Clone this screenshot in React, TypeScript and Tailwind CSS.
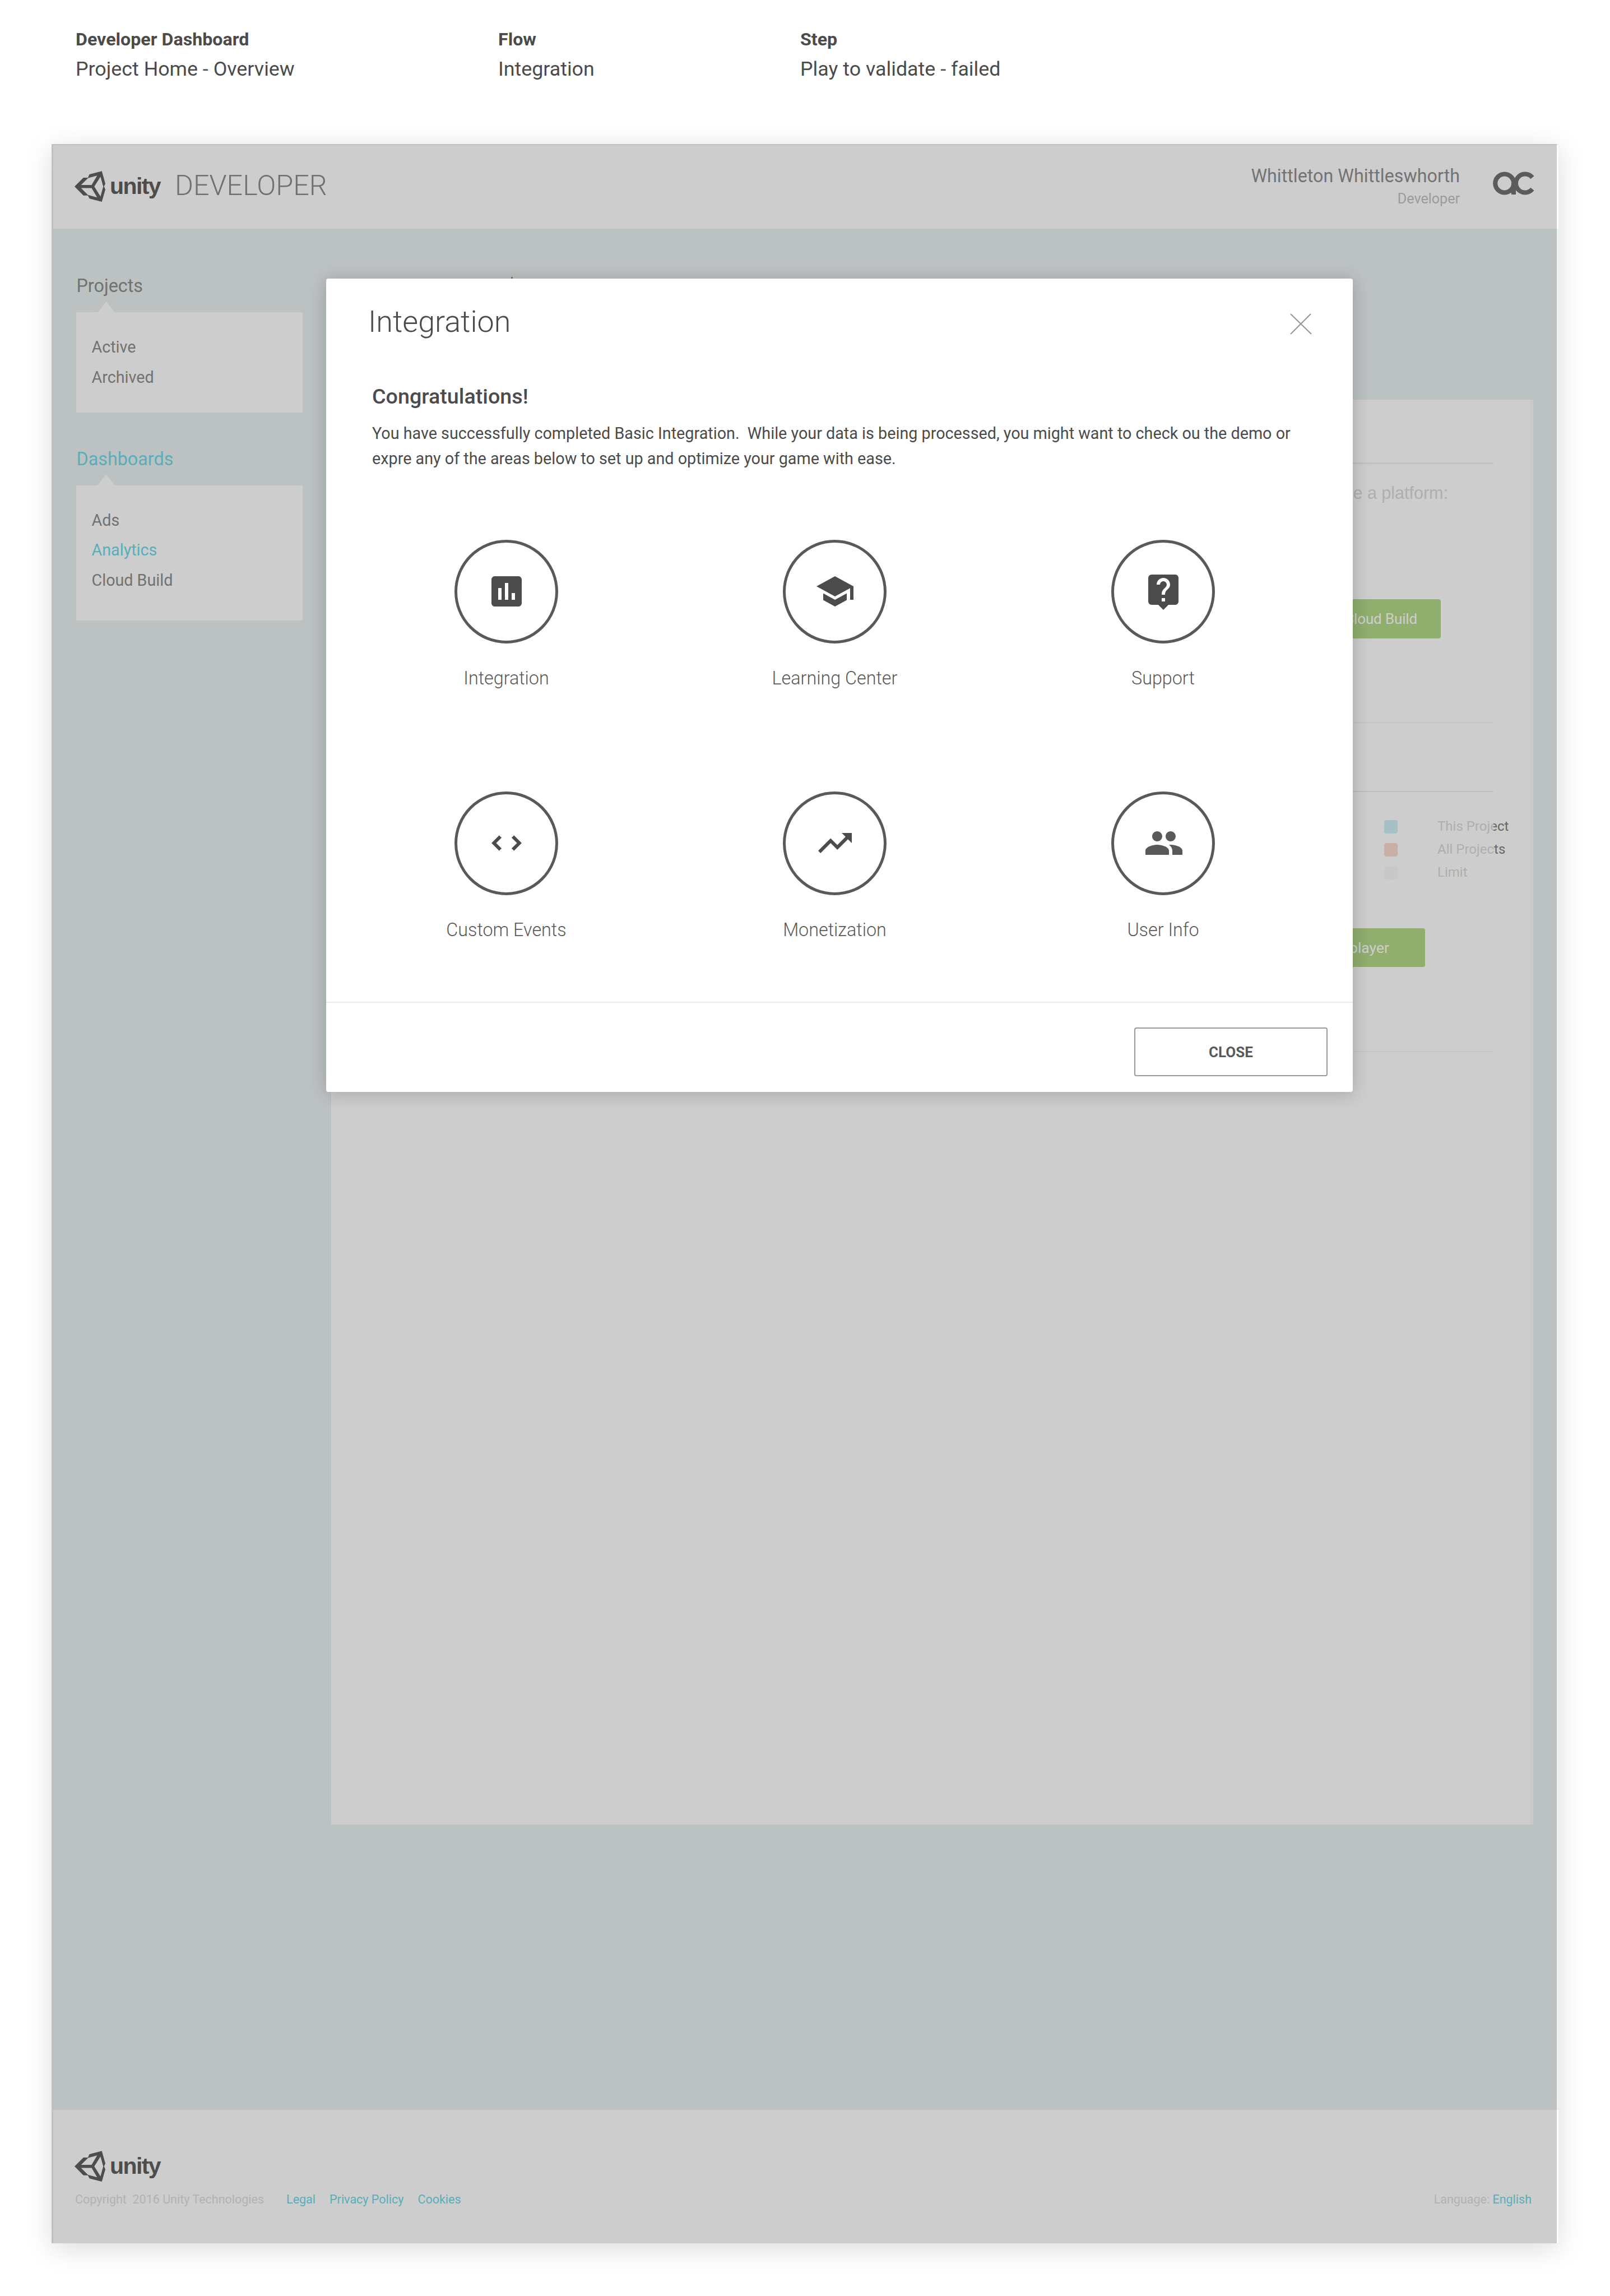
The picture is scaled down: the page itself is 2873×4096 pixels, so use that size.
import type { ReactNode } from "react";
import { MdAssessment, MdLiveHelp, MdPeople, MdSchool, MdTrendingUp } from "react-icons/md";

function UnityLogo() {
  return (
    <div className="flex h-[55px] items-start text-[#606060]">
      <svg className="h-[55px] w-[55px]" viewBox="24 28 184 184" fill="currentColor" fillRule="evenodd">
        <path d="M24 121 77 68H104L113 48 187 29 208 104 200 121 208 138 187 212 113 193 104 174H77ZM63 112H126L159 56 104 71 98 77ZM63 130 98 165 104 171 159 186 126 130ZM142 121 179 180 192 133 196 121 192 109 179 62Z" />
      </svg>
      <span className="ml-[8px] mt-[3px] w-[91px] font-['Liberation_Sans',Arial,sans-serif] text-[41px] font-bold leading-[48px] tracking-[-1.6px]">
        unity
      </span>
    </div>
  );
}

function AcLogo() {
  return (
    <svg className="h-[42px] w-[74px]" viewBox="0 0 82 46" fill="none" stroke="#727272" strokeWidth="9">
      <circle cx="23" cy="23" r="18.3" />
      <path d="M41 22V45.2" />
      <path d="M78 11.6A18.3 18.3 0 1 0 78 34.4" />
    </svg>
  );
}

function NavGroup({
  title,
  items,
  active,
  activeItem,
  boxClass,
}: {
  title: string;
  items: string[];
  active?: boolean;
  activeItem?: string;
  boxClass: string;
}) {
  return (
    <section>
      <h2 className={`pl-[0.5px] text-[32.3px] leading-[48px] ${active ? "text-[#70d9e8]" : "text-[#8e8e8e]"}`}>
        {title}
      </h2>
      <div className={`relative mt-[23px] bg-white pl-[27.5px] pt-[36px] ${boxClass}`}>
        <svg className="absolute -top-[19.5px] left-[38px] h-[20px] w-[31px]" viewBox="0 0 31 20" fill="#fff">
          <path d="M0 20 15.5 0 31 20Z" />
        </svg>
        {items.map((item) => (
          <div
            key={item}
            className={`text-[28.7px] leading-[53.9px] ${item === activeItem ? "text-[#70d9e8]" : "text-[#8e8e8e]"}`}
          >
            {item}
          </div>
        ))}
      </div>
    </section>
  );
}

function CodeIcon() {
  return (
    <svg viewBox="0 0 24 24" fill="currentColor" className="size-[72px]">
      <path d="M3 12 7.6 7.4 9 8.8 5.8 12 9 15.2 7.6 16.6ZM21 12 16.4 7.4 15 8.8 18.2 12 15 15.2 16.4 16.6Z" />
    </svg>
  );
}

const tiles: { label: string; icon: ReactNode }[] = [
  { label: "Integration", icon: <MdAssessment className="size-[72px]" /> },
  { label: "Learning Center", icon: <MdSchool className="size-[72px]" /> },
  { label: "Support", icon: <MdLiveHelp className="size-[72px]" /> },
  { label: "Custom Events", icon: <CodeIcon /> },
  { label: "Monetization", icon: <MdTrendingUp className="size-[72px]" /> },
  { label: "User Info", icon: <MdPeople className="size-[72px] translate-x-px text-[#595959]" /> },
];

const legend = [
  { label: "This Project", swatch: "bg-[#5cd0e4]" },
  { label: "All Projects", swatch: "bg-[#f58758]" },
  { label: "Limit", swatch: "bg-[#e9e9e9]" },
];

function Meta({ label, value, className }: { label: string; value: string; className: string }) {
  return (
    <div className={className}>
      <div className="text-[32.2px] font-bold leading-[54px]">{label}</div>
      <div className="text-[35.8px] leading-[52px]">{value}</div>
    </div>
  );
}

function Modal() {
  return (
    <div className="absolute left-[490px] top-[240px] flex h-[1451px] w-[1832px] flex-col rounded-[4px] bg-white text-[#4b4b4b] shadow-[0_3px_32px_rgba(0,0,0,0.2)]">
      <div className="flex items-start justify-between pl-[75px] pr-[73px] pt-[47px]">
        <h1 className="text-[53.9px] font-light leading-[60px]">Integration</h1>
        <svg className="mt-[15px] h-[38px] w-[39px]" viewBox="0 0 39 38" stroke="#959595" strokeWidth="2">
          <path d="M1 1 38 37M37 1 1 37" />
        </svg>
      </div>
      <div className="mt-[79px] pl-[82px]">
        <h2 className="text-[37.7px] font-medium leading-[48px]">Congratulations!</h2>
        <p className="mt-[20px] whitespace-pre text-[28.75px] leading-[44.9px]">
          {"You have successfully completed Basic Integration.  While your data is being processed, you might want to check ou the demo or\nexpre any of the areas below to set up and optimize your game with ease."}
        </p>
      </div>
      <div className="mx-[28.5px] mt-[122px] grid grid-cols-[586px_586px_586px] gap-y-[182px]">
        {tiles.map((t) => (
          <div key={t.label} className="flex flex-col items-center">
            <div className="flex size-[185px] items-center justify-center rounded-full border-[5px] border-[#595959]">
              {t.icon}
            </div>
            <div className="mt-[42px] text-[32.3px] font-light leading-[40px] text-[#595959]">{t.label}</div>
          </div>
        ))}
      </div>
      <div className="mt-auto flex h-[161px] justify-end border-t-2 border-[#ebebeb] pr-[45px] pt-[44px]">
        <button className="h-[87px] w-[345px] rounded-[4px] border-2 border-[#9a9a9a] pt-px text-[26px] font-bold leading-none text-[#595959]">
          CLOSE
        </button>
      </div>
    </div>
  );
}

export default function App() {
  return (
    <div className="h-[4096px] w-[2873px] overflow-hidden bg-white font-['Roboto',sans-serif]">
      <div className="flex h-[257px] pl-[135px] pt-[43px] text-[#4b4b4b]">
        <Meta label="Developer Dashboard" value="Project Home - Overview" className="w-[754px]" />
        <Meta label="Flow" value="Integration" className="w-[539px]" />
        <Meta label="Step" value="Play to validate - failed" className="" />
      </div>

      <div className="relative ml-[92px] flex h-[3745px] w-[2689px] flex-col bg-[#eaf1f1] pl-[3px] pt-[2px] shadow-[0_9px_45px_rgba(0,0,0,0.145)]">
        <header className="flex h-[149px] items-start bg-white pl-[38px] pr-[43px]">
          <div className="mt-[46px]">
            <UnityLogo />
          </div>
          <div className="ml-[25px] mt-[42px] text-[50.3px] font-light leading-[60px] text-[#8c8c8c]">DEVELOPER</div>
          <div className="ml-auto mt-[35px] text-right">
            <div className="text-[32.3px] leading-[40px] text-[#909090]">Whittleton Whittleswhorth</div>
            <div className="text-[25.1px] leading-[42px] text-[#c2c2c2]">Developer</div>
          </div>
          <div className="ml-[59px] mt-[47px]">
            <AcLogo />
          </div>
        </header>

        <main className="flex h-[3356px] pl-[41px] pt-[78px]">
          <aside className="flex w-[404px] flex-col gap-[58.5px]">
            <NavGroup title="Projects" items={["Active", "Archived"]} boxClass="h-[179px]" />
            <NavGroup
              title="Dashboards"
              items={["Ads", "Analytics", "Cloud Build"]}
              active
              activeItem="Analytics"
              boxClass="h-[241px]"
            />
          </aside>

          <div className="ml-[51px] mt-[227px] h-[2542px] w-[2145px] border-r-[5px] border-[#fafafa] bg-white pr-[66px]">
            <section className="h-[577px] border-b-2 border-[#f7f7f7] pt-[112px]">
              <div className="h-[3px] bg-[#f1f1f1]" />
              <div className="flex flex-col items-end">
                <p className="mr-[81px] mt-[31px] font-['Liberation_Sans',Arial,sans-serif] text-[30.5px] leading-[40px] text-[#dadada]">
                  Choose a platform:
                </p>
                <div className="mr-[94px] mt-[170px] flex h-[70px] w-[260px] items-center justify-end rounded-[4px] bg-[#b3d989] pr-[42px] text-[26px] tracking-[-0.15px] text-white">
                  Cloud Build
                </div>
              </div>
            </section>
            <section className="relative h-[587px] border-b-2 border-[#f7f7f7] pt-[121px]">
              <div className="h-[2px] bg-[#eeeeee]" />
              <ul className="ml-[1879px] mt-[41px] w-[260px]">
                {legend.map((l) => (
                  <li key={l.label} className="flex h-[41px] items-center">
                    <span className={`size-[24px] rounded-[4px] ${l.swatch}`} />
                    <span className="ml-[71px] text-[24px] leading-[41px] text-[#808080]">{l.label}</span>
                  </li>
                ))}
              </ul>
              <div className="absolute right-0 top-[130px] h-[170px] w-[240px] bg-white/70" />
              <div className="ml-auto mr-[122px] mt-[79px] flex h-[69px] w-[240px] items-center justify-end rounded-[4px] bg-[#b3d989] pr-[64px] text-[26.5px] text-white">
                player
              </div>
            </section>
          </div>
        </main>

        <footer className="flex-1 bg-white pl-[38px] pr-[48px] pt-[73px]">
          <UnityLogo />
          <div className="mt-[12px] flex text-[21.5px] leading-[40px] text-[#70d9e8]">
            <span className="ml-px whitespace-pre text-[#dedede]">Copyright  2016 Unity Technologies</span>
            <span className="ml-[40px]">Legal</span>
            <span className="ml-[25px]">Privacy Policy</span>
            <span className="ml-[25px]">Cookies</span>
            <span className="ml-auto whitespace-pre">
              <span className="text-[#dedede]">Language: </span>English
            </span>
          </div>
        </footer>

        <div className="absolute inset-y-0 left-0 w-[2686px] bg-black/[0.195]" />
        <div className="absolute left-[820px] top-[237px] h-[3px] w-[3px] bg-[#757575]" />
        <Modal />
      </div>
    </div>
  );
}
